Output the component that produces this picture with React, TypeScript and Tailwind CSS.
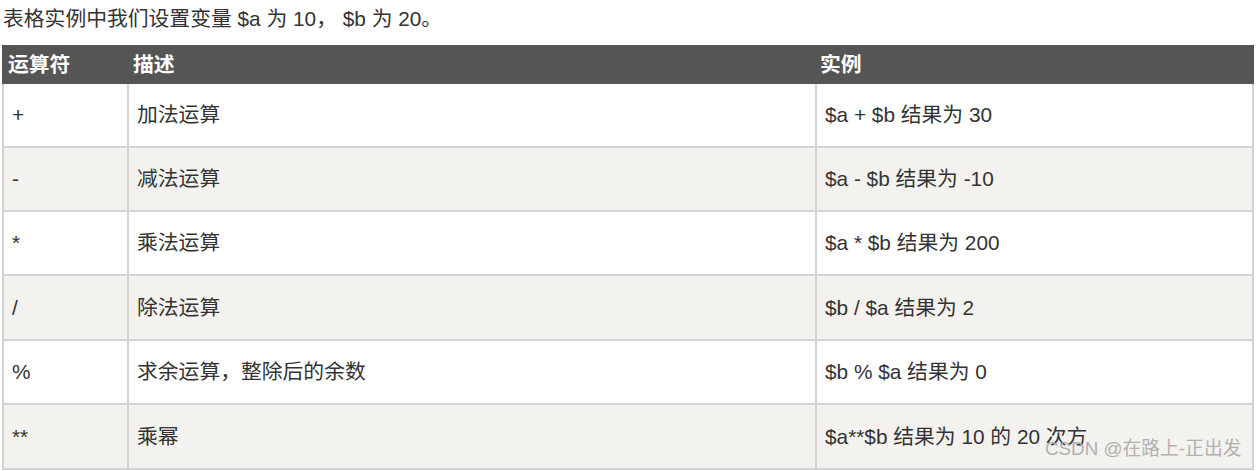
const rows: [string, string, string][] = [
  ["+", "加法运算", "$a + $b 结果为 30"],
  ["-", "减法运算", "$a - $b 结果为 -10"],
  ["*", "乘法运算", "$a * $b 结果为 200"],
  ["/", "除法运算", "$b / $a 结果为 2"],
  ["%", "求余运算，整除后的余数", "$b % $a 结果为 0"],
  ["**", "乘幂", "$a**$b 结果为 10 的 20 次方"],
];

const font = "font-['Liberation_Sans','Noto_Sans_CJK_SC',sans-serif]";

const App = (): JSX.Element => (
  <div className={`relative w-[1257px] h-[471px] bg-white text-[#333] text-[20.8px] ${font}`}>
    <div className="h-[45px] pl-[3px] pt-[4px] leading-[30px]">
      表格实例中我们设置变量 $a 为 10， $b 为 20。
    </div>
    <div className="ml-[2px] w-[1252px]">
      <div className="flex h-[39px] items-center bg-[#555555] font-bold text-white">
        <div className="w-[125px] pl-[6px]">运算符</div>
        <div className="w-[688px] pl-[6px]">描述</div>
        <div className="w-[439px] pl-[5px]">实例</div>
      </div>
      {rows.map(([op, desc, ex], i) => (
        <div
          key={i}
          className={`flex border-b-2 border-[#d4d4d4] ${i === 3 || i === 5 ? "h-[65px]" : "h-[64px]"} ${i % 2 === 1 ? "bg-[#f3f2ee]" : "bg-white"}`}
        >
          <div className="flex w-[125px] items-center border-l-2 border-[#d4d4d4] pl-[8px]">{op}</div>
          <div className="flex w-[688px] items-center border-l-2 border-[#d4d4d4] pl-[8px]">{desc}</div>
          <div className="flex w-[439px] items-center border-x-2 border-[#d4d4d4] pl-[8px]">{ex}</div>
        </div>
      ))}
    </div>
    <div className="absolute left-[1045px] top-[436px] text-[18.8px] leading-[26px] text-[#a8a8a8]/90">
      CSDN @在路上-正出发
    </div>
  </div>
);

export default App;
